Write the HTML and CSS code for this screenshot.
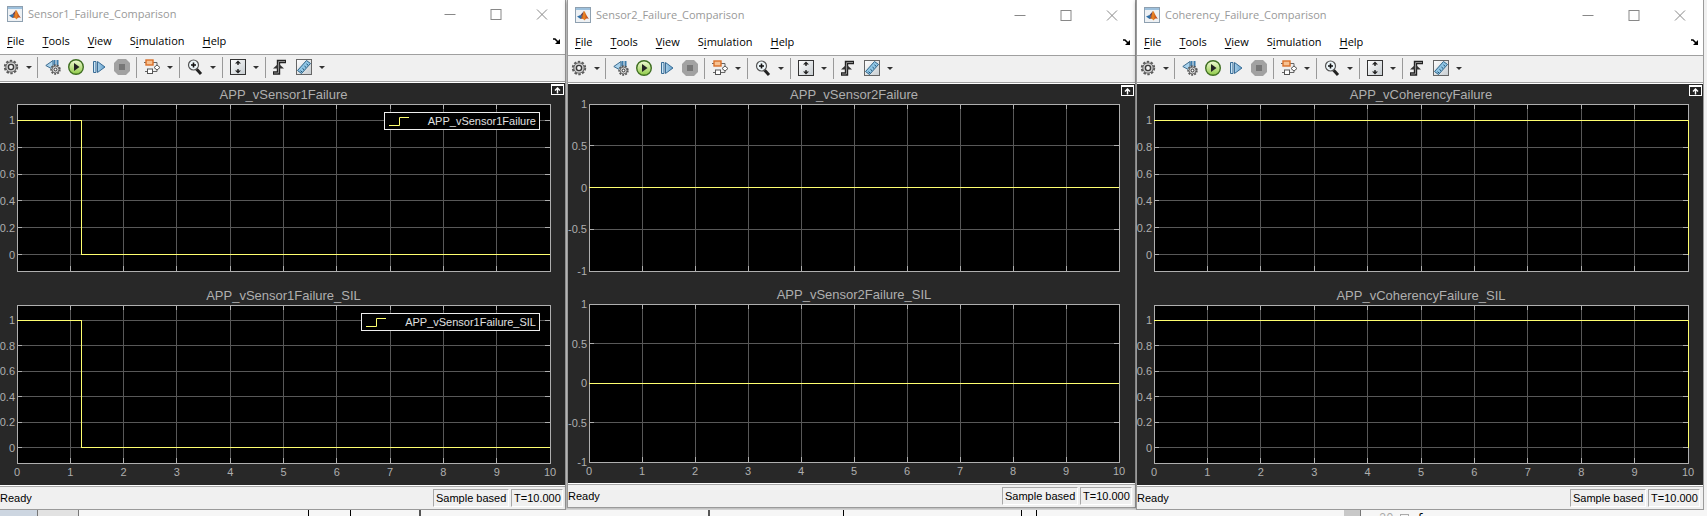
FILE: index.html
```html
<!DOCTYPE html>
<html lang="en">
<head>
<meta charset="utf-8">
<title>Failure comparison scopes</title>
<link rel="stylesheet" href="styles.css">
</head>
<body>
<svg class="defs" aria-hidden="true">
  <defs>
    <linearGradient id="g-run" x1="0" y1="0" x2="0" y2="1"><stop offset="0" stop-color="#f3fbd8"/><stop offset="1" stop-color="#8fca45"/></linearGradient>
    <linearGradient id="g-blue" x1="0" y1="0" x2="1" y2="0"><stop offset="0" stop-color="#d3ebfa"/><stop offset="1" stop-color="#5d9cc9"/></linearGradient>
    <linearGradient id="g-box" x1="0" y1="0" x2="1" y2="1"><stop offset="0" stop-color="#fff"/><stop offset="1" stop-color="#c6ccd0"/></linearGradient>
    <linearGradient id="g-logo" x1="0" y1="0" x2="1" y2="0"><stop offset="0" stop-color="#8a2c1a"/><stop offset=".4" stop-color="#f08a24"/><stop offset="1" stop-color="#a52a12"/></linearGradient>
  </defs>
  <symbol id="i-matlab" viewBox="0 0 16 16">
    <rect x=".5" y=".5" width="15" height="15" fill="#eef1f4" stroke="#8ea0b0"/>
    <path d="M1 1h14v2H1z" fill="#9dc0dc"/>
    <path d="M2 9.500l3.500-1.500 2 2-2 2z" fill="#2f6fa8"/>
    <path d="M5.500 8l3.500-4-1.500 6z" fill="#5b3f5c"/>
    <path d="M9 4c1 0 2.500 5 5 8-2-1-3-.5-4.500 1.500C8.500 12 7.500 11.500 5.500 12 7.500 10 8 5 9 4z" fill="url(#g-logo)"/>
  </symbol>
  <symbol id="i-gear" viewBox="0 0 16 16">
    <circle cx="8" cy="8" r="6.200" fill="none" stroke="#5a5a5a" stroke-width="2" stroke-dasharray="2.400 1.496"/>
    <circle cx="8" cy="8" r="5.200" fill="#cfcfcf" stroke="#6a6a6a"/>
    <circle cx="8" cy="8" r="2.600" fill="#f4f4f4" stroke="#3a3a3a" stroke-width="1.400"/>
  </symbol>
  <symbol id="i-back" viewBox="0 0 16 16">
    <path d="M8 1.500v9L.8 6.500z" fill="#a9d2ec" stroke="#3d6c8f"/>
    <path d="M9.500 1v6M12.500 1v6" stroke="#3d7cab" stroke-width="2"/>
    <circle cx="10.500" cy="10.500" r="4.400" fill="#eee" stroke="#555" stroke-width="1.600" stroke-dasharray="1.900 1.172"/>
    <circle cx="10.500" cy="10.500" r="3.500" fill="#d6d6d6" stroke="#666"/>
    <circle cx="10.500" cy="10.500" r="1.400" fill="#fff" stroke="#333"/>
  </symbol>
  <symbol id="i-run" viewBox="0 0 16 16">
    <circle cx="8" cy="8" r="7.300" fill="url(#g-run)" stroke="#3f6e22" stroke-width="1.400"/>
    <path d="M6 4l5.500 4L6 12z" fill="#222"/>
  </symbol>
  <symbol id="i-step" viewBox="0 0 16 16">
    <path d="M2.500 2.500H5v11H2.500zM6.500 2.500L14 8l-7.500 5.500z" fill="url(#g-blue)" stroke="#3a6d96"/>
  </symbol>
  <symbol id="i-stop" viewBox="0 0 16 16">
    <path d="M4 0h8l4 4v8l-4 4H4l-4-4V4z" fill="#a2a2a2"/>
    <rect x="5" y="5" width="6" height="6" fill="#777"/>
  </symbol>
  <symbol id="i-blocks" viewBox="0 0 16 16">
    <path d="M0 3.500h10M10 3.500h3V7M1 12.500h12V10" fill="none" stroke="#666"/>
    <rect x="2" y="1" width="7" height="5" fill="#f7c191" stroke="#d9702a" stroke-width="1.400"/>
    <rect x="3.500" y="10" width="5" height="4.500" fill="#fff" stroke="#555"/>
    <path d="M10 8.500l3-2.500 3 2.500-3 2.500z" fill="#fff" stroke="#555"/>
  </symbol>
  <symbol id="i-zoom" viewBox="0 0 16 16">
    <path d="M9.500 10l4.500 5" stroke="#222" stroke-width="3"/>
    <circle cx="6.500" cy="6" r="5" fill="#eef7fb" stroke="#555" stroke-width="1.200"/>
    <path d="M6.500 3.500v5M4 6h5" stroke="#111" stroke-width="1.600"/>
  </symbol>
  <symbol id="i-fit" viewBox="0 0 16 16">
    <rect x=".5" y=".5" width="15" height="15" fill="url(#g-box)" stroke="#333"/>
    <path d="M8 1.500l3 3H5zM8 14.500l3-3H5z" fill="#222"/>
    <path d="M8 4v2M8 10v2" stroke="#222" stroke-width="1.400"/>
  </symbol>
  <symbol id="i-trigger" viewBox="0 0 16 16">
    <path d="M0 14h5.500V2.500H13" fill="none" stroke="#222" stroke-width="3.400"/>
    <path d="M5.500 4.500L11 9.500H0z" fill="#333"/>
    <path d="M1 14h4.500V2.500H12" fill="none" stroke="#8b8b8b"/>
  </symbol>
  <symbol id="i-ruler" viewBox="0 0 16 16">
    <rect x=".5" y=".5" width="15" height="15" fill="url(#g-box)" stroke="#666"/>
    <path d="M1.500 11.500l9-10 4 3-9 10z" fill="#8fc6e6" stroke="#2e6286"/>
    <path d="M6 13l-1.500-1.300M8 10.700L6.500 9.400M10 8.400L8.500 7.100M12 6.200l-1.500-1.300" stroke="#1d4a6a"/>
  </symbol>
  <symbol id="i-min" viewBox="0 0 11 11"><path d="M0 5.500h11" stroke="#888"/></symbol>
  <symbol id="i-max" viewBox="0 0 11 11"><rect x=".5" y=".5" width="10" height="10" fill="none" stroke="#888"/></symbol>
  <symbol id="i-close" viewBox="0 0 11 11"><path d="M.5.5l10 10M10.500.5l-10 10" stroke="#888"/></symbol>
  <symbol id="i-dock" viewBox="0 0 8 8"><path d="M0 2h2l3 3" fill="none" stroke="#000" stroke-width="1.600"/><path d="M7 2v5H2z" fill="#000"/></symbol>
  <symbol id="i-popout" viewBox="0 0 13 11">
    <rect x=".5" y=".5" width="12" height="10" fill="#222" stroke="#fff"/>
    <path d="M1 1.500h11" stroke="#fff"/><path d="M6.500 3.500v6M4 6.500l2.500-2.500L9 6.500" fill="none" stroke="#fff" stroke-width="1.400"/>
  </symbol>
</svg>

<main class="desktop" id="desktop"></main>

<div class="backdrop">
  <span class="pane pane-blue"></span>
  <span class="pane pane-grey"></span>
  <span class="pane"></span>
  <span class="pane"></span>
  <span class="pane pane-thick"></span>
  <span class="pane pane-thick"></span>
  <span class="pane"></span>
  <span class="pane"></span>
  <span class="pane"></span>
  <span class="pane pane-open"></span>
  <span class="pane pane-scroll"></span>
  <code class="code"><span class="line-no">20</span><span class="fold"></span>{</code>
</div>
<script src="scopes.js"></script>
</body>
</html>
```
FILE: styles.css
```css
* { box-sizing: border-box; }

body {
  margin: 0;
  min-height: 100vh;
  display: flex;
  flex-direction: column;
  overflow: hidden;
  background: #f6f6f6;
  font-family: "Liberation Sans", Arial, sans-serif;
  font-size: 11px;
  color: #000;
}

button {
  margin: 0;
  padding: 0;
  border: 0;
  background: none;
  font: inherit;
  color: inherit;
  display: flex;
}

h1, h2 { margin: 0; font-weight: 400; }

.defs { position: absolute; width: 0; height: 0; }

.desktop {
  display: grid;
  grid-template-columns: 567fr 569fr 568fr 3px;
  align-items: start;
}

.window {
  background: #fff;
  border: solid #9a9a9a;
  border-width: 0 1px 1px;
  box-shadow: 0 1px 4px rgba(0, 0, 0, .35);
}

.window-first { border-left: 0; margin-right: 1px; }

.titlebar {
  display: flex;
  align-items: center;
  height: 28px;
  padding: 0 17px 0 7px;
  gap: 5px;
}

.window-lower .titlebar { height: 29px; padding-top: 1px; }

.titlebar h1 {
  flex: 1;
  font: 11px/16px "Open Sans", sans-serif;
  color: #999;
}

.icon { width: 16px; height: 16px; flex: none; }

.window-buttons { display: flex; gap: 34px; }
.icon-window { width: 12px; height: 11px; }

.menubar {
  display: flex;
  align-items: center;
  gap: 18px;
  height: 26px;
  padding: 0 4px 0 7px;
  font: 11px/16px "Open Sans", sans-serif;
}

.menubar u { text-underline-offset: 2px; }
.icon-dock { width: 8px; height: 8px; }
.dock { margin-left: auto; }

.toolbar {
  display: flex;
  align-items: center;
  height: 28px;
  padding: 0 3px 2px;
  background: #f0f0f0;
  border: solid #a0a0a0;
  border-width: 1px 0;
}

.group {
  display: flex;
  align-items: center;
  gap: 7px;
  height: 21px;
  padding: 0 6px 0 8px;
}

.group:first-child { padding-left: 0; padding-right: 5px; }
.group + .group { padding-left: 7px; border-left: 1px solid #999; }

.has-menu { align-items: center; gap: 7px; }
.has-menu::after {
  content: "";
  border: solid transparent;
  border-width: 3px 3px 0;
  border-top-color: #333;
}

.figure {
  position: relative;
  background: #282828;
  border-top: 1px solid #fff;
  padding: 3px 15px 22px 17px;
  color: #afafaf;
}

.window-lower .figure { padding-top: 2px; }
.window-second .figure { padding: 2px 16px 21px 21px; }
.popout { position: absolute; top: 1px; right: 1px; }
.icon-popout { width: 13px; height: 11px; }

.plot { position: relative; }
.plot + .plot { margin-top: 16px; }
.window-second .plot + .plot { margin-top: 15px; }

.plot h2 {
  margin-bottom: 1px;
  font-size: 13px;
  line-height: 17px;
  text-align: center;
}

.axes {
  display: block;
  width: 100%;
  height: 167px;
  overflow: visible;
  background: #000;
  shape-rendering: crispEdges;
}

.plot + .plot .axes { height: 158px; }

.grid { stroke: #585858; }
.tick, .frame { stroke: #afafaf; fill: none; }
.signal { stroke: #ffff70; }
.axes text { fill: #afafaf; font-size: 11px; }
.label-y { text-anchor: end; }
.label-x { text-anchor: middle; }

.legend {
  position: absolute;
  top: 26px;
  right: 10px;
  display: flex;
  align-items: center;
  gap: 18px;
  height: 18px;
  padding: 0 3px;
  border: 1px solid #eee;
  background: #000;
  color: #e0e0e0;
  line-height: 16px;
}

.legend svg { width: 22px; height: 10px; }
.legend path { fill: none; stroke: #ffff70; }

.statusbar {
  display: flex;
  align-items: center;
  gap: 2px;
  height: 24px;
  padding: 1px 2px 0 0;
  background: #f0f0f0;
  border-top: 1px solid #fff;
  box-shadow: inset 0 1px #a8a8a8;
}

.window-lower .statusbar { padding-right: 3px; }

.state { flex: 1; }

.cell {
  height: 18px;
  padding: 0 0 0 2px;
  line-height: 16px;
  white-space: nowrap;
  border: 1px solid;
  border-color: #a8a8a8 #fff #fff #a8a8a8;
}

.cell-mode { min-width: 76px; }
.cell-time { min-width: 52px; }

.edge {
  align-self: stretch;
  background: #f0f0f0;
}

.backdrop {
  flex: 1;
  display: grid;
  grid-template-columns: 38fr 41fr 230fr 42fr 70fr 289fr 134fr 178fr 15fr 307fr 17fr 346fr;
  height: 7px;
  overflow: hidden;
  background: #f6f6f6;
}

.pane { border-right: 1px solid #000; }
.pane-blue { background: #cdd6e1; border-color: #777; }
.pane-grey { background: #e2e2e2; border-color: #777; }
.pane-thick { border-width: 2px; border-color: #555; }
.pane-open { border: 0; }
.pane-scroll { background: #c8c8c8; border-color: #777; }

.code {
  display: flex;
  gap: 7px;
  padding: 2px 0 0 18px;
  font: 12px/14px "Liberation Mono", monospace;
}

.line-no { color: #aaa; }
.fold { width: 9px; height: 9px; margin-top: 2px; border: 1px solid #aaa; }
```
FILE: scopes.js
```js
const unit = { min: -0.12, max: 1.12, ticks: [0, 0.2, 0.4, 0.6, 0.8, 1] };
const symmetric = { min: -1, max: 1, ticks: [-1, -0.5, 0, 0.5, 1] };
const drop = [[0, 1], [1.21, 1], [1.21, 0], [10, 0]];
const late = [[0, 1], [10, 1], [10, 0]];
const flat = [[0, 0], [10, 0]];

const scopes = [
  { title: "Sensor1_Failure_Comparison", css: "window-first", name: "APP_vSensor1Failure", scale: unit, points: drop, legend: true },
  { title: "Sensor2_Failure_Comparison", css: "window-lower window-second", name: "APP_vSensor2Failure", scale: symmetric, points: flat },
  { title: "Coherency_Failure_Comparison", css: "window-lower", name: "APP_vCoherencyFailure", scale: unit, points: late }
];

const icon = (name, css = "") => `<svg class="icon ${css}" aria-hidden="true"><use href="#i-${name}"/></svg>`;
const tool = (name, label, menu) => `<button class="${menu ? "has-menu" : ""}" aria-label="${label}">${icon(name)}</button>`;
const line = (css, x1, y1, x2, y2) => `<line class="${css}" x1="${x1}" y1="${y1}" x2="${x2}" y2="${y2}"/>`;

function axes(scope, withTime) {
  const px = x => x * 10 + "%";
  const py = y => (scope.scale.max - y) / (scope.scale.max - scope.scale.min) * 100 + "%";
  let out = "";
  for (let x = 0; x <= 10; x++) {
    out += line("grid", px(x), 0, px(x), "100%") + line("tick", px(x), 0, px(x), 5);
    out += `<svg y="100%" overflow="visible">${line("tick", px(x), -5, px(x), 0)}`;
    if (withTime) out += `<text class="label-x" x="${px(x)}" y="13">${x}</text>`;
    out += "</svg>";
  }
  for (const y of scope.scale.ticks) {
    out += line("grid", 0, py(y), "100%", py(y)) + line("tick", 0, py(y), 5, py(y));
    out += `<svg x="100%" overflow="visible">${line("tick", -5, py(y), 0, py(y))}</svg>`;
    out += `<text class="label-y" x="-2" y="${py(y)}" dy="4">${y}</text>`;
  }
  out += `<rect class="frame" width="100%" height="100%"/>`;
  scope.points.slice(1).forEach(([x, y], i) => {
    const [x0, y0] = scope.points[i];
    out += line("signal", px(x0), py(y0), px(x), py(y));
  });
  return `<svg class="axes">${out}</svg>`;
}

function plot(scope, name, withTime) {
  const legend = scope.legend
    ? `<div class="legend"><svg aria-hidden="true"><path d="M1 9.500h10.500v-8H21"/></svg><span>${name}</span></div>` : "";
  return `<section class="plot"><h2>${name}</h2>${axes(scope, withTime)}${legend}</section>`;
}

document.getElementById("desktop").innerHTML = scopes.map(s => `
  <article class="window ${s.css}">
    <header class="titlebar">${icon("matlab")}<h1>${s.title}</h1>
      <div class="window-buttons">
        <button aria-label="Minimize">${icon("min", "icon-window")}</button>
        <button aria-label="Maximize">${icon("max", "icon-window")}</button>
        <button aria-label="Close">${icon("close", "icon-window")}</button>
      </div>
    </header>
    <nav class="menubar">
      <button><u>F</u>ile</button><button><u>T</u>ools</button><button><u>V</u>iew</button>
      <button>S<u>i</u>mulation</button><button><u>H</u>elp</button>
      <button class="dock" aria-label="Dock">${icon("dock", "icon-dock")}</button>
    </nav>
    <div class="toolbar">
      <div class="group">${tool("gear", "Configuration", true)}</div>
      <div class="group">${tool("back", "Stepping options")}${tool("run", "Run")}${tool("step", "Step forward")}${tool("stop", "Stop")}</div>
      <div class="group">${tool("blocks", "Highlight block", true)}</div>
      <div class="group">${tool("zoom", "Zoom", true)}</div>
      <div class="group">${tool("fit", "Scale axes", true)}</div>
      <div class="group">${tool("trigger", "Triggers")}${tool("ruler", "Measurements", true)}</div>
    </div>
    <div class="figure">
      <button class="popout" aria-label="Maximize axes">${icon("popout", "icon-popout")}</button>
      ${plot(s, s.name, false)}${plot(s, s.name + "_SIL", true)}
    </div>
    <footer class="statusbar"><span class="state">Ready</span><span class="cell cell-mode">Sample based</span><span class="cell cell-time">T=10.000</span></footer>
  </article>`).join("") + `<div class="edge"></div>`;
```
